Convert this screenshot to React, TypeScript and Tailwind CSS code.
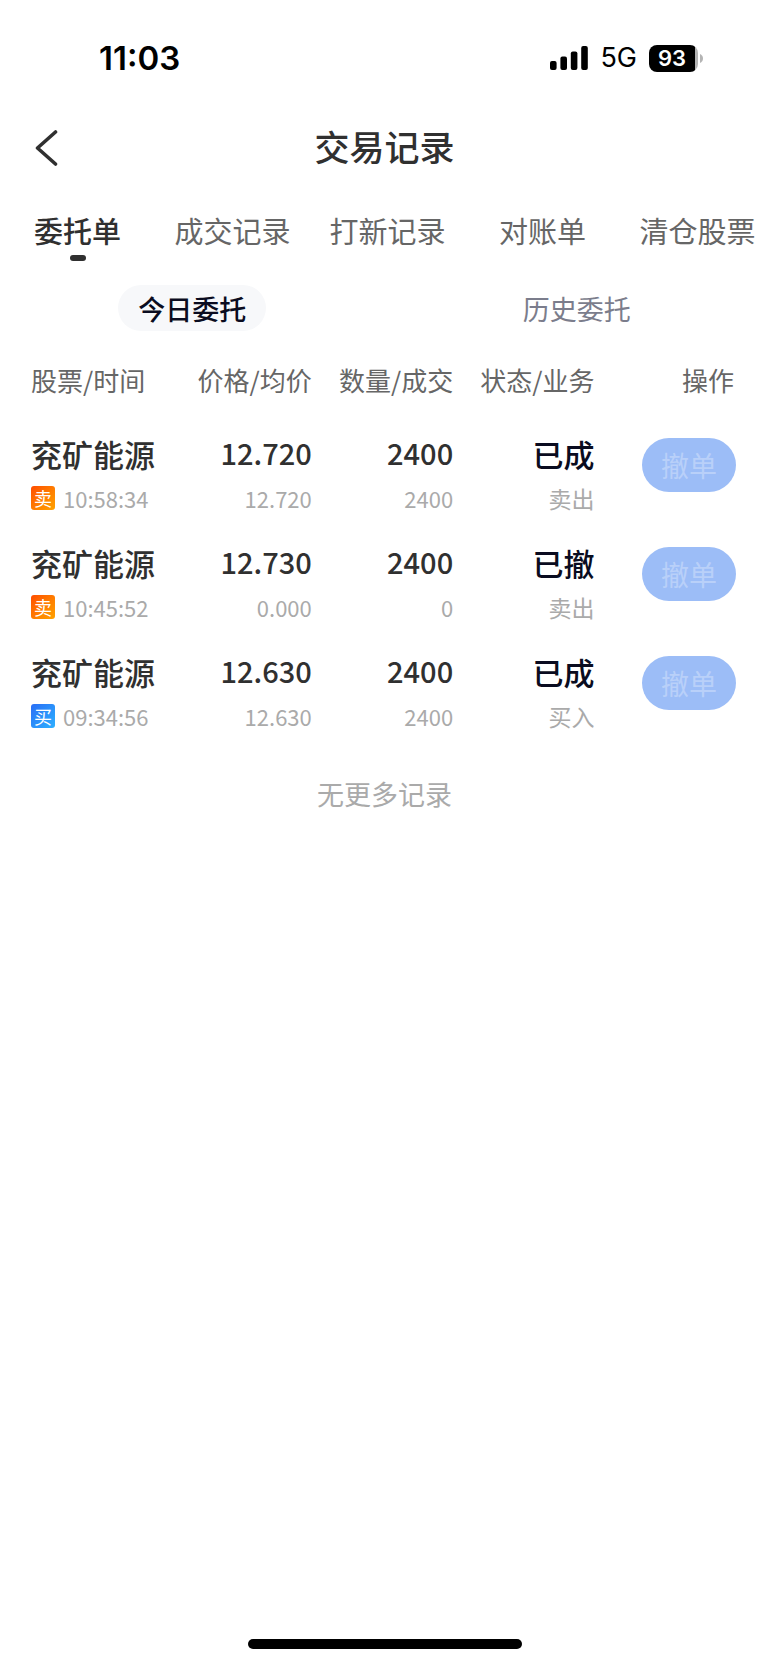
import React, { useState } from "react";

type Order = {
  name: string;
  side: "buy" | "sell";
  time: string;
  price: string;
  avgPrice: string;
  amount: string;
  filled: string;
  status: string;
};

const tabs = ["委托单", "成交记录", "打新记录", "对账单", "清仓股票"];
const ranges = ["今日委托", "历史委托"];
const columns = ["价格/均价", "数量/成交", "状态/业务"];

const orders: Order[] = [
  { name: "兖矿能源", side: "sell", time: "10:58:34", price: "12.720", avgPrice: "12.720", amount: "2400", filled: "2400", status: "已成" },
  { name: "兖矿能源", side: "sell", time: "10:45:52", price: "12.730", avgPrice: "0.000", amount: "2400", filled: "0", status: "已撤" },
  { name: "兖矿能源", side: "buy", time: "09:34:56", price: "12.630", avgPrice: "12.630", amount: "2400", filled: "2400", status: "已成" },
];

const StatusBar: React.FC = () => (
  <div className="flex h-[116px] items-center justify-between pr-[66px] pl-[99px] font-['Inter',sans-serif] text-black">
    <span className="text-[33px] leading-10 font-semibold">11:03</span>
    <div className="flex items-center">
      <svg width="38" height="24" viewBox="0 0 38 24" fill="currentColor" aria-hidden="true">
        <rect x="0" y="15" width="6.6" height="9" rx="2" />
        <rect x="10.4" y="10.5" width="6.6" height="13.5" rx="2" />
        <rect x="20.8" y="5.5" width="6.6" height="18.5" rx="2" />
        <rect x="31.2" y="0" width="6.6" height="24" rx="2" />
      </svg>
      <span className="ml-3 text-[27px] leading-10">5G</span>
      <div className="ml-3 flex items-center">
        <div className="flex h-[27px] w-[49px] items-center justify-center rounded-lg bg-[linear-gradient(to_right,#000_93%,#b4b4b4_93%)] pr-[3px] text-[22px] leading-7 font-semibold text-white">
          93
        </div>
        <svg className="ml-[2px]" width="3" height="9" viewBox="0 0 3 9" fill="#b4b4b4" aria-hidden="true">
          <path d="M0 0C1.8 0.9 3 2.5 3 4.5S1.8 8.1 0 9Z" />
        </svg>
      </div>
    </div>
  </div>
);

const OrderRow: React.FC<{ order: Order }> = ({ order }) => {
  const isBuy = order.side === "buy";

  return (
    <tr className="text-right align-top">
      <td className="pt-[9px] pb-[26px] text-left">
        <div className="text-[31px] leading-9 font-medium whitespace-nowrap text-[#303030]">{order.name}</div>
        <div className="mt-[14px] flex items-center gap-2 text-[22px] leading-6 text-[#aaa]">
          <span
            className={`flex size-6 items-center justify-center rounded-[3px] bg-linear-to-br text-[18px] text-white ${
              isBuy ? "from-[#2b6df5] to-[#2fb0ff]" : "from-[#ff4a00] to-[#ffa200]"
            }`}
          >
            {isBuy ? "买" : "卖"}
          </span>
          {order.time}
        </div>
      </td>
      <td className="pt-[9px] pr-[2px]">
        <div className="text-[29px] leading-8 font-medium text-[#303030]">{order.price}</div>
        <div className="mt-[18px] text-[22px] leading-6 text-[#aaa]">{order.avgPrice}</div>
      </td>
      <td className="pt-[9px] pr-[2px]">
        <div className="text-[29px] leading-8 font-medium text-[#303030]">{order.amount}</div>
        <div className="mt-[18px] text-[22px] leading-6 text-[#aaa]">{order.filled}</div>
      </td>
      <td className="pt-[9px] pr-[2px]">
        <div className="text-[31px] leading-9 font-medium text-[#0a0c20]">{order.status}</div>
        <div className="mt-[14px] text-[23px] leading-6 text-[#aaa]">{isBuy ? "买入" : "卖出"}</div>
      </td>
      <td className="pt-[11px] pr-[2px]">
        <button disabled className="h-[54px] w-[94px] rounded-full bg-[#9cbdf7] text-[28px] leading-9 text-[#b9d0f9]">
          撤单
        </button>
      </td>
    </tr>
  );
};

const App: React.FC = () => {
  const [activeTab, setActiveTab] = useState(0);
  const [activeRange, setActiveRange] = useState(0);

  return (
    <div className="flex min-h-screen flex-col overflow-hidden bg-white font-['Noto_Sans_CJK_SC',sans-serif]">
      <StatusBar />

      <header className="grid h-16 grid-cols-[1fr_auto_1fr] items-center px-[35px] text-[#303030]">
        <button aria-label="返回" className="justify-self-start">
          <svg width="24" height="36" viewBox="0 0 24 36" fill="none" stroke="currentColor" strokeWidth="3.6" strokeLinecap="round" strokeLinejoin="round">
            <path d="M20.5 2L2.5 18L20.5 34" />
          </svg>
        </button>
        <h1 className="pb-1 text-[35px] leading-10 font-medium">交易记录</h1>
      </header>

      <nav className="flex overflow-hidden pt-[30px]">
        {tabs.map((tab, i) => (
          <button
            key={tab}
            onClick={() => setActiveTab(i)}
            className={`flex w-[155px] flex-none flex-col items-center text-[29px] leading-10 ${
              activeTab === i ? "font-medium text-[#303030]" : "text-[#666]"
            }`}
          >
            {tab}
            <span className={`mt-[5px] h-[6px] w-4 rounded-full ${activeTab === i ? "bg-[#303030]" : ""}`} />
          </button>
        ))}
      </nav>

      <div className="mt-6 grid grid-cols-2 justify-items-center">
        {ranges.map((range, i) => (
          <button
            key={range}
            onClick={() => setActiveRange(i)}
            className={`h-[46px] rounded-full px-5 pt-[2px] text-[27px] leading-10 ${
              activeRange === i ? "bg-[#f7f8fa] font-medium text-[#0a0c20]" : "text-[#7b7d8c]"
            }`}
          >
            {range}
          </button>
        ))}
      </div>

      <main className="px-[31px]">
        <table className="w-full table-fixed">
          <thead>
            <tr className="h-24 text-right text-[26px] whitespace-nowrap text-[#666]">
              <th className="text-left font-normal">股票/时间</th>
              {columns.map((column) => (
                <th key={column} className="pr-[2px] font-normal">{column}</th>
              ))}
              <th className="pr-1 font-normal">操作</th>
            </tr>
          </thead>
          <tbody>
            {orders.map((order) => (
              <OrderRow key={order.time} order={order} />
            ))}
          </tbody>
        </table>
        <p className="mt-5 text-center text-[27px] leading-10 text-[#aaa]">无更多记录</p>
      </main>

      <div className="mt-auto flex justify-center pb-4">
        <div className="h-[10px] w-[274px] rounded-full bg-black" />
      </div>
    </div>
  );
};

export default App;
